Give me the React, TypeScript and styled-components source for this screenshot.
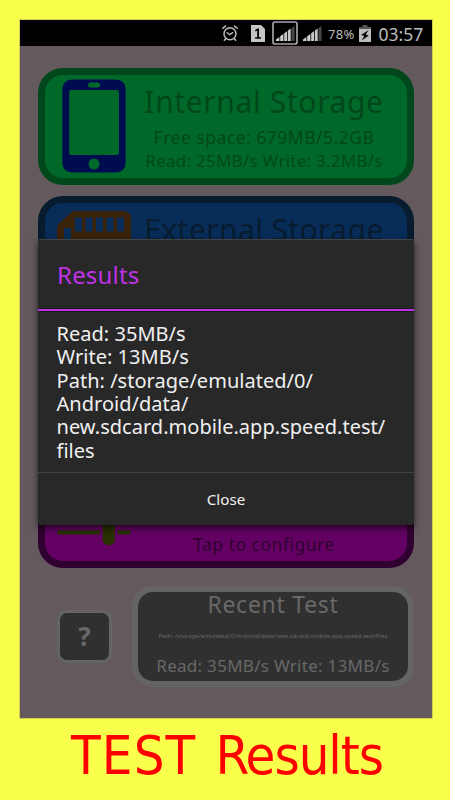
import React from 'react';
import styled, { createGlobalStyle } from 'styled-components';

const GlobalStyle = createGlobalStyle`
  * { box-sizing: border-box; }
  body { margin: 0; background: #f9ff4b; font-family: "Noto Sans", "Open Sans", sans-serif; }
`;

const Poster = styled.div`
  width: 450px;
  height: 800px;
  padding: 20px 18px 0 20px;
  overflow: hidden;
  background: #f9ff4b;
`;

const Screen = styled.div`
  position: relative;
  width: 412px;
  height: 698px;
  background: #645a5e;
  box-shadow: 0 0 0 1px #d0d04f;
`;

const StatusBar = styled.header`
  display: flex;
  align-items: center;
  height: 26px;
  padding-left: 201px;
  background: #000;
  color: #bcbcbc;
`;

const StatusItem = styled.span<{ $gap: number }>`
  display: flex;
  margin-right: ${p => p.$gap}px;
`;

const StatusText = styled.span<{ $size: number; $spacing: number; $gap: number }>`
  font-size: ${p => p.$size}px;
  line-height: 26px;
  letter-spacing: ${p => p.$spacing}px;
  margin-right: ${p => p.$gap}px;
  padding-top: 1px;
`;

const CardList = styled.main`
  display: flex;
  flex-direction: column;
  gap: 11px;
  padding: 22px 18px 0 18px;
`;

const Card = styled.section<{ $fill: string; $edge: string }>`
  display: flex;
  width: 376px;
  height: 117px;
  border: 7px solid ${p => p.$edge};
  border-radius: 25px;
  background: ${p => p.$fill};
  color: ${p => p.$edge};
`;

const CardIcon = styled.div`
  flex: none;
  width: 90px;
  height: 103px;
  svg { display: block; }
`;

const CardBody = styled.div<{ $align?: 'flex-start' | 'flex-end' }>`
  display: flex;
  flex-direction: column;
  align-items: center;
  justify-content: ${p => p.$align ?? 'flex-start'};
  width: 258px;
  padding: 5px 0;
  white-space: nowrap;
`;

const CardTitle = styled.h2<{ $spacing: number }>`
  margin: 0 0 1px;
  font-size: 30px;
  font-weight: 400;
  line-height: 44px;
  letter-spacing: ${p => p.$spacing}px;
`;

const CardLine = styled.div<{ $size: number; $spacing: number }>`
  font-size: ${p => p.$size}px;
  line-height: 24px;
  letter-spacing: ${p => p.$spacing}px;
`;

const HiddenSlot = styled.div`
  height: 116px;
`;

const BottomRow = styled.div`
  display: flex;
  align-items: center;
  justify-content: space-between;
  width: 376px;
  margin-top: 7px;
  padding-left: 19px;
`;

const HelpButton = styled.button`
  width: 55px;
  height: 53px;
  padding: 0 0 2px;
  border: 3px solid #646464;
  border-radius: 10px;
  background: #303030;
  color: #686868;
  font: 700 26px/40px "Noto Sans", sans-serif;
`;

const RecentCard = styled.section`
  display: flex;
  flex-direction: column;
  align-items: center;
  width: 282px;
  height: 101px;
  border: 6px solid #646464;
  border-radius: 21px;
  background: #303030;
  color: #686868;
  white-space: nowrap;
`;

const RecentTitle = styled.h2`
  margin: 0;
  font-size: 23px;
  font-weight: 400;
  line-height: 25px;
  letter-spacing: 0.72px;
`;

const RecentPath = styled.div`
  font-size: 6px;
  line-height: 38px;
  letter-spacing: 0.04px;
`;

const RecentSpeed = styled.div`
  font-size: 17px;
  line-height: 22px;
  letter-spacing: 0.28px;
`;

const Dialog = styled.div`
  position: absolute;
  top: 219px;
  left: 18px;
  width: 376px;
  height: 286px;
  border-top: 1px solid #434343;
  border-radius: 2px;
  background: #282828;
  box-shadow: 0 3px 7px rgba(0, 0, 0, 0.65);
`;

const DialogTitle = styled.h1`
  height: 71px;
  margin: 0;
  padding: 0 19px;
  border-bottom: 2px solid #bf32e6;
  box-shadow: 0 1px 0 #181818, inset 0 -1px 0 #181818;
  color: #bf32e6;
  font-size: 24px;
  font-weight: 400;
  line-height: 69px;
  letter-spacing: 0.2px;
`;

const DialogBody = styled.p`
  height: 161px;
  margin: 0;
  padding: 10.8px 0 0 18.5px;
  color: #f0f0f0;
  font-size: 20px;
  line-height: 23.4px;
  letter-spacing: 0.03px;
  white-space: pre;
`;

const CloseButton = styled.button`
  display: block;
  width: 100%;
  height: 53px;
  padding: 0;
  border: 0;
  border-top: 1px solid #414141;
  background: none;
  color: #f0f0f0;
  font: 400 15.2px/52px "Noto Sans", sans-serif;
`;

const Caption = styled.footer`
  display: flex;
  justify-content: center;
  gap: 19px;
  padding-left: 2px;
  color: #ff0000;
  font: 54px/76px "DejaVu Sans Condensed", "DejaVu Sans", sans-serif;
`;

const CaptionWord = styled.span<{ $spacing: number }>`
  letter-spacing: ${p => p.$spacing}px;
`;

const AlarmIcon = () => (
  <svg width="18" height="18" viewBox="0 0 18 18" fill="none" stroke="#bcbcbc" strokeWidth="1.5">
    <circle cx="9" cy="9.7" r="6" />
    <path d="M1.3 4.6 5 1.6M16.7 4.6 13 1.6M4.9 14.2 3 16.7M13.1 14.2l1.9 2.5" />
    <path d="m5.6 8.3 3 2.4 3.6-2.4" strokeWidth="1.4" />
  </svg>
);

const SimIcon = () => (
  <svg width="14" height="17" viewBox="0 0 14 17">
    <path d="M0 0h10l4 4v13H0z" fill="#c4c4c4" />
    <path d="M4.2 5.1 6.6 3.5H8v8.800h2v1.500H4.100v-1.500h2.100V5.700l-2 .9z" fill="#000" />
  </svg>
);

const SignalBars = () => (
  <>
    <path d="M0 15v-1.600L3.400 11v4zM4.200 15v-4.800l3.200-2.300V15z" fill="#d0d0d0" />
    <path d="M8.200 15V7.300l3-2.200V15zM12 15V4.500l2.700-2V15z" fill="#c8c8c8" />
    <path d="M15.500 15V1.900L18.500 0v15z" fill="#484848" />
  </>
);

const FramedSignal = () => (
  <svg width="26" height="24" viewBox="0 0 26 24">
    <rect x="1" y="1" width="24" height="22" rx="2" fill="none" stroke="#a4a4a4" strokeWidth="1.7" />
    <g transform="translate(4 5)"><SignalBars /></g>
  </svg>
);

const Signal = () => (
  <svg width="19" height="17" viewBox="0 0 19 17">
    <g transform="translate(0 1)"><SignalBars /></g>
  </svg>
);

const BatteryIcon = () => (
  <svg width="12" height="17" viewBox="0 0 12 17">
    <path d="M3.5 0h5v2H12v2.3H0V2h3.500z" fill="#555" />
    <path d="M0 4h12v13H0z" fill="#bcbcbc" />
    <path d="M9.800 5 2.200 10l3.200 1-2.800 4.400 7.200-5-3.200-1z" fill="#000" />
  </svg>
);

const PhoneIcon = () => (
  <svg width="90" height="103" viewBox="45 75 90 103">
    <path
      fill="#000c50"
      fillRule="evenodd"
      d="M73 79.500h42q10.700 0 10.700 11v71q0 11-10.700 11H73q-10.700 0-10.700-11v-71q0-11 10.700-11zM71 90q-1.800 0-1.800 2v61q0 2 1.800 2h46q2 0 2-2V92q0-2-2-2zM90.500 82.500a2.500 2.500 0 0 0 0 5h7a2.500 2.500 0 0 0 0-5zM94 158.500a5.500 5.500 0 1 0 0 11a5.500 5.500 0 1 0 0-11z"
    />
  </svg>
);

const SdCardIcon = () => (
  <svg width="90" height="103" viewBox="45 203 90 103">
    <path d="M75 211h48q8 0 8 8v78q0 8-8 8H65q-8 0-8-8v-68q0-4 3-6.500l10-9q2-2.500 5-2.500z" fill="#3a2209" />
    <path d="M75 217.500h7v14h-7zM85.500 217.500h7v14h-7zM96 217.500h7v14h-7zM106.500 217.500h7v14h-7zM117 217.500h7v14h-7zM64 228h7v14h-7z" fill="#082c58" />
  </svg>
);

const SlidersIcon = () => (
  <svg width="90" height="103" viewBox="45 458 90 103" fill="#283000">
    <rect x="57.5" y="530.3" width="42.5" height="4.2" rx="1" />
    <rect x="117.5" y="530.3" width="12.7" height="4.2" rx="1" />
    <rect x="102.5" y="517" width="12.500" height="28" rx="5.500" />
  </svg>
);

const PATH = '/storage/emulated/0/Android/data/new.sdcard.mobile.app.speed.test/files';
const RESULT_LINES = [
  'Read: 35MB/s',
  'Write: 13MB/s',
  'Path: /storage/emulated/0/',
  'Android/data/',
  'new.sdcard.mobile.app.speed.test/',
  'files',
];

export default function App() {
  return (
    <Poster>
      <GlobalStyle />
      <Screen>
        <StatusBar>
          <StatusItem $gap={12}><AlarmIcon /></StatusItem>
          <StatusItem $gap={7}><SimIcon /></StatusItem>
          <StatusItem $gap={5}><FramedSignal /></StatusItem>
          <StatusItem $gap={6}><Signal /></StatusItem>
          <StatusText $size={13} $spacing={0.3} $gap={4}>78%</StatusText>
          <StatusItem $gap={8}><BatteryIcon /></StatusItem>
          <StatusText $size={17.5} $spacing={0} $gap={0}>03:57</StatusText>
        </StatusBar>

        <CardList>
          <Card $fill="#006828" $edge="#00481c">
            <CardIcon><PhoneIcon /></CardIcon>
            <CardBody>
              <CardTitle $spacing={0.63}>Internal Storage</CardTitle>
              <CardLine $size={17.5} $spacing={0.5}>Free space: 679MB/5.2GB</CardLine>
              <CardLine $size={17} $spacing={0.25}>Read: 25MB/s Write: 3.2MB/s</CardLine>
            </CardBody>
          </Card>
          <Card $fill="#082c58" $edge="#081c30">
            <CardIcon><SdCardIcon /></CardIcon>
            <CardBody>
              <CardTitle $spacing={0.4}>External Storage</CardTitle>
            </CardBody>
          </Card>
          <HiddenSlot />
          <Card $fill="#640064" $edge="#300030">
            <CardIcon><SlidersIcon /></CardIcon>
            <CardBody $align="flex-end">
              <CardLine $size={17.5} $spacing={0.5}>Tap to configure</CardLine>
            </CardBody>
          </Card>
          <BottomRow>
            <HelpButton>?</HelpButton>
            <RecentCard>
              <RecentTitle>Recent Test</RecentTitle>
              <RecentPath>Path: {PATH}</RecentPath>
              <RecentSpeed>Read: 35MB/s Write: 13MB/s</RecentSpeed>
            </RecentCard>
          </BottomRow>
        </CardList>

        <Dialog role="dialog">
          <DialogTitle>Results</DialogTitle>
          <DialogBody>{RESULT_LINES.join('\n')}</DialogBody>
          <CloseButton>Close</CloseButton>
        </Dialog>
      </Screen>
      <Caption>
        <CaptionWord $spacing={1.1}>TEST</CaptionWord>
        <CaptionWord $spacing={-1.1}>Results</CaptionWord>
      </Caption>
    </Poster>
  );
}
